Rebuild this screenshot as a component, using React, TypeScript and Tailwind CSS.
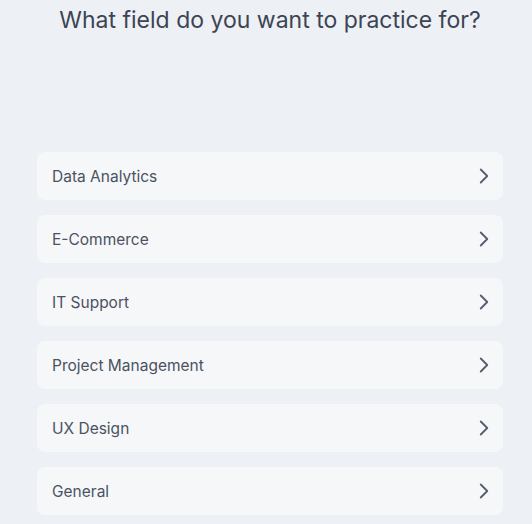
import { ChevronRight } from "lucide-react";

const fields = [
  "Data Analytics",
  "E-Commerce",
  "IT Support",
  "Project Management",
  "UX Design",
  "General",
];

export default function App() {
  return (
    <div
      className="min-h-screen w-full bg-[#edf0f5] flex flex-col items-center pl-[8px]"
      style={{ fontFamily: "Inter, 'Noto Sans', sans-serif" }}
    >
      <h1 className="mt-[4px] text-[23px] leading-[32px] text-[#3d4452] text-center">
        What field do you want to practice for?
      </h1>
      <div className="mt-[116px] w-[466px] flex flex-col gap-[15px]">
        {fields.map((f) => (
          <button
            key={f}
            className="h-[48px] w-full rounded-[8px] bg-[#f6f7f9] flex items-center justify-between pl-[15px] pr-[6px] text-left"
          >
            <span className="text-[15.5px] leading-[24px] pt-[1px] text-[#4b5262]">{f}</span>
            <ChevronRight className="w-[26px] h-[26px] text-[#555e6e]" strokeWidth={1.7} />
          </button>
        ))}
      </div>
    </div>
  );
}
